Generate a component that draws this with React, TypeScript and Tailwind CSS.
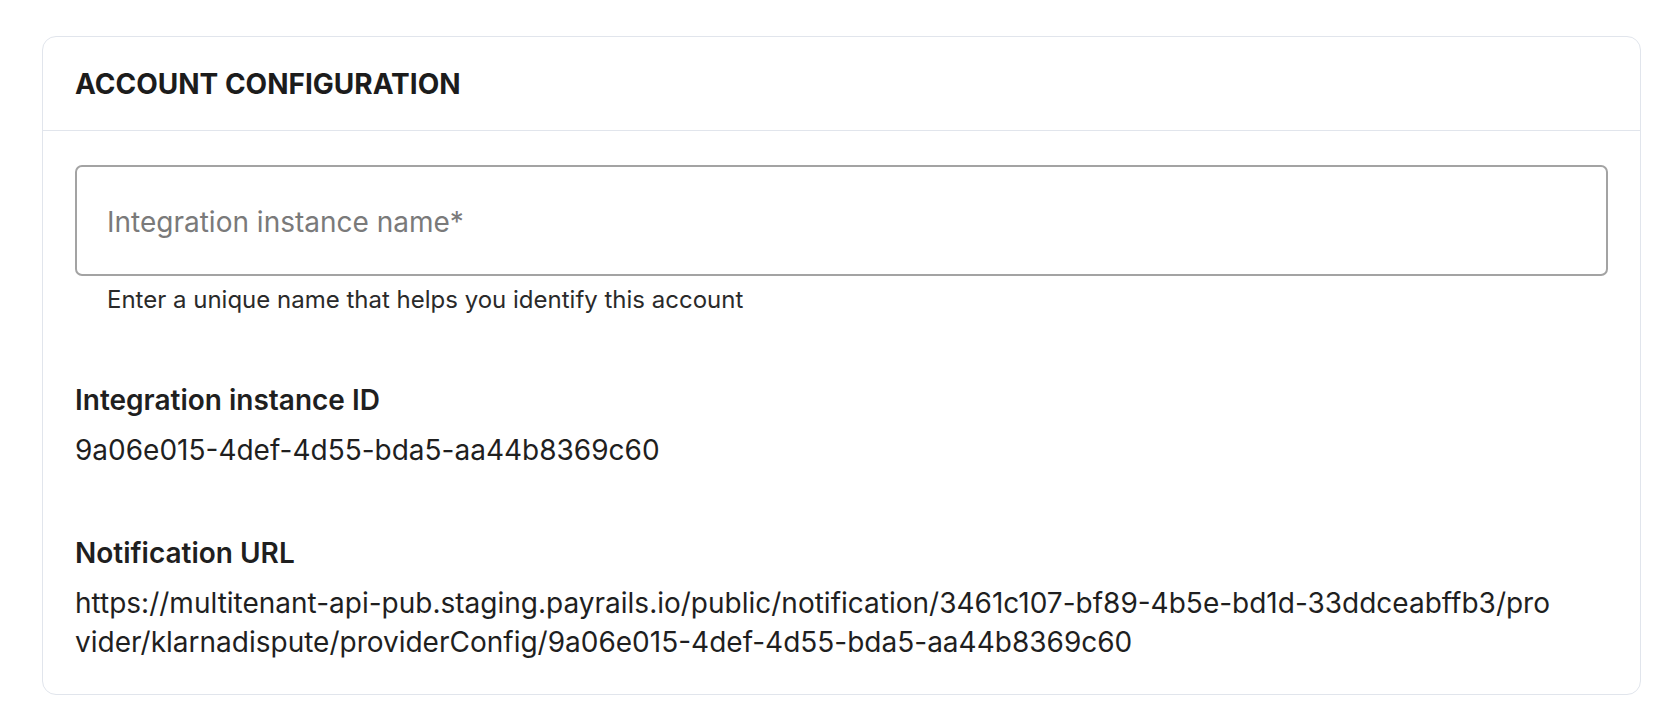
export default function App() {
  return (
    <div className="min-h-screen w-full bg-white pt-[36px] pl-[42px]" style={{ fontFamily: "Inter, 'Noto Sans', sans-serif" }}>
      <div className="w-[1599px] rounded-[14px] border border-[#e1e5ec] bg-white">
        <div className="flex h-[94px] items-center border-b border-[#e1e5ec] px-[32px]">
          <h2 className="text-[28px] font-bold leading-none text-[#1c1c1c]">ACCOUNT CONFIGURATION</h2>
        </div>
        <div className="px-[32px] pt-[34px] pb-[32px]">
          <div className="flex h-[111px] w-full items-center rounded-[7px] border-2 border-[#a3a3a3] pl-[30px]">
            <span className="mt-[3px] text-[28px] leading-none text-[#7a7a7a]">Integration instance name*</span>
          </div>
          <p className="ml-[32px] mt-[9px] text-[24px] leading-[30px] text-[#2a2a2a]">
            Enter a unique name that helps you identify this account
          </p>

          <div className="mt-[66px]">
            <div className="text-[28px] font-semibold leading-[38px] text-[#1f1f1f]">Integration instance ID</div>
            <div className="mt-[12px] text-[28px] leading-[38px] text-[#1f1f1f]">9a06e015-4def-4d55-bda5-aa44b8369c60</div>
          </div>

          <div className="mt-[65px]">
            <div className="text-[28px] font-semibold leading-[38px] text-[#1f1f1f]">Notification URL</div>
            <div className="mt-[12px] text-[28px] leading-[39px] text-[#1f1f1f]">
              <span className="block whitespace-nowrap">
                https://multitenant-api-pub.staging.payrails.io/public/notification/3461c107-bf89-4b5e-bd1d-33ddceabffb3/pro
              </span>
              <span className="block whitespace-nowrap">
                vider/klarnadispute/providerConfig/9a06e015-4def-4d55-bda5-aa44b8369c60
              </span>
            </div>
          </div>
        </div>
      </div>
    </div>
  );
}
